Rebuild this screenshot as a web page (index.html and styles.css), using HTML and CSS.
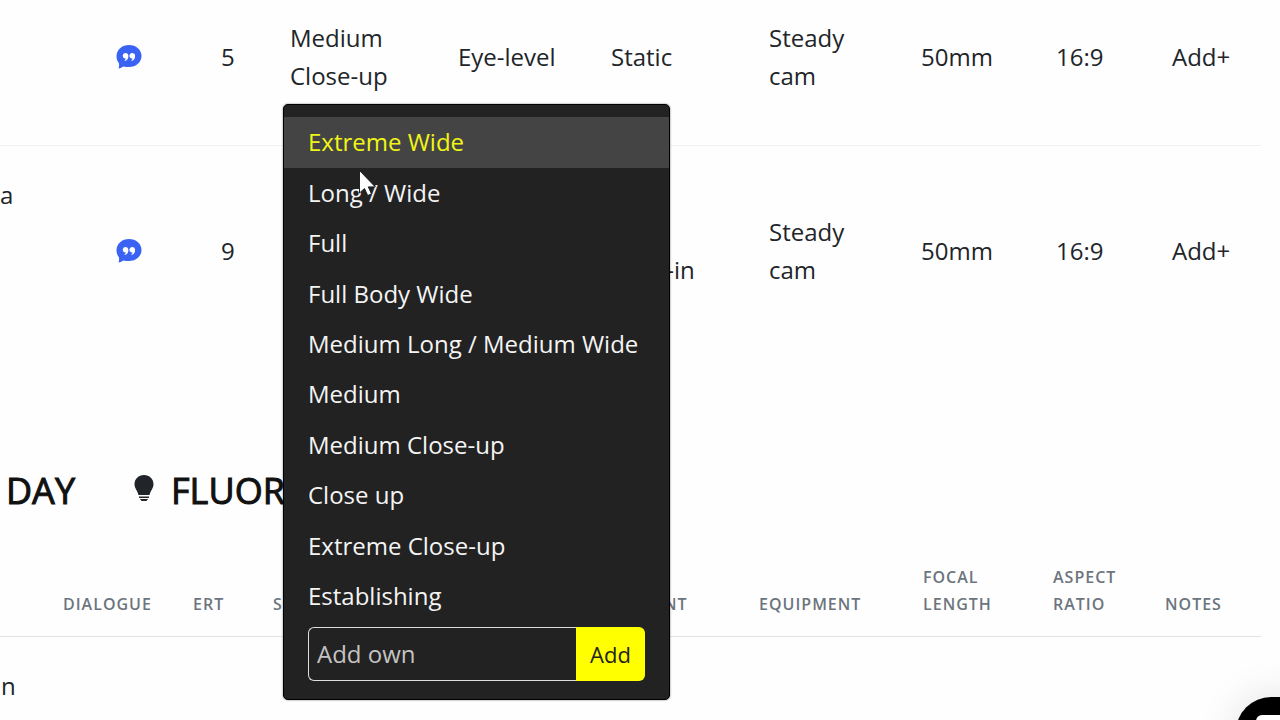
FILE: index.html
```
<!DOCTYPE html>
<html lang="en">
<head>
    <meta charset="UTF-8">
    <meta name="viewport" content="width=device-width, initial-scale=1.0">
    <title>Shot List</title>
    <link rel="stylesheet" href="styles.css">
</head>
<body>
    <svg class="symbols" aria-hidden="true">
        <symbol id="icon-quote" viewBox="0 0 26 24">
            <path fill="#3b63f3" d="M13 0C20 0 25.500 4.800 25.500 11S20 22 13 22c-2 0-3.800-.3-5.400-.6C6 22 4.500 23.500 2.500 23.500c.6-1.500 .8-3.500 .4-5.300C1.300 16.200 .5 13.800 .5 11 .5 4.800 6 0 13 0z"/>
            <path fill="#fff" d="M9.300 8a2.800 2.800 0 0 0-.5 5.500H10c-.2.900-.8 1.400-1.500 1.800l.5.700C11.200 15.300 12.400 13.600 12.400 11 12.400 9.200 11.200 8 9.300 8zM16 8a2.800 2.800 0 0 0-.5 5.500h1.200c-.2.900-.8 1.400-1.500 1.800l.5.700c2.200-.7 3.400-2.400 3.400-5C19.100 9.200 17.900 8 16 8z"/>
        </symbol>
    </svg>

    <main class="shotlist">
        <table class="shots">
            <colgroup>
                <col>
                <col class="w-105">
                <col class="w-69">
                <col class="w-168">
                <col class="w-153">
                <col class="w-158">
                <col class="w-152">
                <col class="w-135">
                <col class="w-116">
                <col class="w-89">
            </colgroup>
            <tbody>
                <tr class="tall">
                    <td></td>
                    <td><svg class="quote" role="img" aria-label="Dialogue"><use href="#icon-quote"/></svg></td>
                    <td>5</td>
                    <td>
                        <div class="dropdown">
                            Medium<br>Close-up
                            <div class="menu">
                                <ul>
                                    <li><button class="active">Extreme Wide</button></li>
                                    <li><button>Long / Wide</button></li>
                                    <li><button>Full</button></li>
                                    <li><button>Full Body Wide</button></li>
                                    <li><button>Medium Long / Medium Wide</button></li>
                                    <li><button>Medium</button></li>
                                    <li><button>Medium Close-up</button></li>
                                    <li><button>Close up</button></li>
                                    <li><button>Extreme Close-up</button></li>
                                    <li><button>Establishing</button></li>
                                </ul>
                                <form class="add-own">
                                    <input type="text" placeholder="Add own" aria-label="Add own">
                                    <button type="button">Add</button>
                                </form>
                                <svg class="cursor" viewBox="0 0 17 26" aria-hidden="true">
                                    <path fill="#fff" stroke="#222" d="M.5 .5v22.500l5-4.500 3.200 7 3.800-1.600-3.200-7h7z"/>
                                </svg>
                            </div>
                        </div>
                    </td>
                    <td>Eye-level</td>
                    <td>Static</td>
                    <td>Steady<br>cam</td>
                    <td>50mm</td>
                    <td>16:9</td>
                    <td>Add+</td>
                </tr>
                <tr class="taller">
                    <td class="top">a</td>
                    <td><svg class="quote" role="img" aria-label="Dialogue"><use href="#icon-quote"/></svg></td>
                    <td>9</td>
                    <td></td>
                    <td></td>
                    <td><br>Push-in</td>
                    <td>Steady<br>cam</td>
                    <td>50mm</td>
                    <td>16:9</td>
                    <td>Add+</td>
                </tr>
            </tbody>
        </table>

        <h2 class="scene">
            <span>DAY</span>
            <svg class="bulb" viewBox="0 0 20 26" aria-hidden="true">
                <path fill="#212529" d="M10 0c5.500 0 9.500 4 9.500 9.300 0 4.200-3 6.300-4 10.700h-11c-1-4.400-4-6.500-4-10.700C.5 4 4.500 0 10 0zM5 21.500h10V23H5zM6 24h8l-1.500 2h-5z"/>
            </svg>
            <span>FLUOR</span>
        </h2>

        <table class="shots">
            <colgroup>
                <col>
                <col class="w-130">
                <col class="w-80">
                <col class="w-168">
                <col class="w-147">
                <col class="w-171">
                <col class="w-164">
                <col class="w-130">
                <col class="w-112">
                <col class="w-96">
            </colgroup>
            <thead>
                <tr>
                    <th></th>
                    <th>Dialogue</th>
                    <th>ERT</th>
                    <th>Size</th>
                    <th></th>
                    <th>Movement</th>
                    <th>Equipment</th>
                    <th>Focal<br>length</th>
                    <th>Aspect<br>ratio</th>
                    <th>Notes</th>
                </tr>
            </thead>
            <tbody>
                <tr>
                    <td class="top clipped">in</td>
                    <td></td>
                    <td></td>
                    <td></td>
                    <td></td>
                    <td></td>
                    <td></td>
                    <td></td>
                    <td></td>
                    <td></td>
                </tr>
            </tbody>
        </table>
    </main>

    <button class="chat" aria-label="Open chat"><span></span></button>
</body>
</html>
```

FILE: styles.css
```
* {
    box-sizing: border-box;
}

html, body {
    height: 100%;
}

body {
    margin: 0;
    overflow: hidden;
    background: #fefefe;
    color: #212529;
    font-family: "Open Sans", "Noto Sans", sans-serif;
    font-size: 24px;
    line-height: 38px;
}

button, input {
    font: inherit;
}

.symbols {
    position: absolute;
    width: 0;
    height: 0;
}

.shotlist {
    padding-right: 19px;
}

.shots {
    width: 100%;
    table-layout: fixed;
    border-collapse: collapse;
}

.w-69 { width: 69px; }
.w-80 { width: 80px; }
.w-89 { width: 89px; }
.w-96 { width: 96px; }
.w-105 { width: 105px; }
.w-112 { width: 112px; }
.w-116 { width: 116px; }
.w-130 { width: 130px; }
.w-135 { width: 135px; }
.w-147 { width: 147px; }
.w-152 { width: 152px; }
.w-153 { width: 153px; }
.w-158 { width: 158px; }
.w-164 { width: 164px; }
.w-168 { width: 168px; }
.w-171 { width: 171px; }

.shots td {
    padding: 30px 0;
    vertical-align: middle;
    white-space: nowrap;
}

.shots .top {
    vertical-align: top;
}

.shots .clipped {
    text-indent: -5px;
}

.tall {
    height: 145px;
    border-bottom: 1px solid #f0f0f0;
}

.shots .tall td {
    padding-top: 0;
}

.taller {
    height: 212px;
}

.shots th {
    padding: 0 0 18px;
    border-bottom: 1px solid #dee2e6;
    color: #6c757d;
    font-size: 16px;
    font-weight: 600;
    line-height: 27px;
    letter-spacing: 1px;
    text-align: left;
    text-transform: uppercase;
    vertical-align: bottom;
}

.quote {
    display: block;
    width: 26px;
    height: 24px;
}

.scene {
    display: flex;
    align-items: center;
    margin: 108px 0 47px;
    padding-left: 6px;
    color: #111;
    font-size: 36px;
    font-weight: 400;
    line-height: 52px;
    -webkit-text-stroke: 1px #111;
}

.bulb {
    width: 20px;
    height: 26px;
    margin: 0 17px 6px 59px;
}

.dropdown {
    position: relative;
}

.menu {
    position: absolute;
    z-index: 10;
    top: calc(100% + 9px);
    left: -7px;
    width: 387px;
    padding: 12px 0 18px;
    border: 1px solid #000;
    border-radius: 5px;
    background: #222;
    box-shadow: 0 0 2px rgba(0, 0, 0, 0.6);
}

.menu ul {
    display: flex;
    flex-direction: column;
    height: 504px;
    margin: 0 0 6px;
    padding: 0;
    list-style: none;
}

.menu li {
    display: flex;
    flex: 1;
}

.menu li button {
    width: 100%;
    padding: 0 24px;
    border: none;
    background: none;
    color: #f4f4f4;
    text-align: left;
    white-space: nowrap;
    cursor: pointer;
}

.menu li button:hover,
.menu li .active {
    background: #444;
    color: #f0f516;
}

.add-own {
    display: flex;
    height: 54px;
    margin: 0 24px;
}

.add-own input {
    flex: 1;
    min-width: 0;
    padding: 0 8px;
    border: 1px solid #ddd;
    border-right: none;
    border-radius: 6px 0 0 6px;
    background: #222;
    color: #eee;
}

.add-own input::placeholder {
    color: #c4c4c4;
}

.add-own button {
    width: 69px;
    padding: 0;
    border: none;
    border-radius: 0 6px 6px 0;
    background: #ff0;
    color: #222;
    font-size: 22px;
}

.cursor {
    position: absolute;
    top: 65px;
    left: 75px;
    width: 17px;
    height: 26px;
}

/* sits partly off the corner of the window */
.chat {
    position: fixed;
    right: -40px;
    bottom: -47px;
    width: 84px;
    height: 70px;
    padding: 18px 20px;
    border: none;
    border-radius: 35px;
    background: #000;
    box-shadow: 0 0 40px rgba(0, 0, 0, 0.12);
}

.chat span {
    display: block;
    height: 100%;
    border-radius: 6px;
    background: #fff;
}
```
